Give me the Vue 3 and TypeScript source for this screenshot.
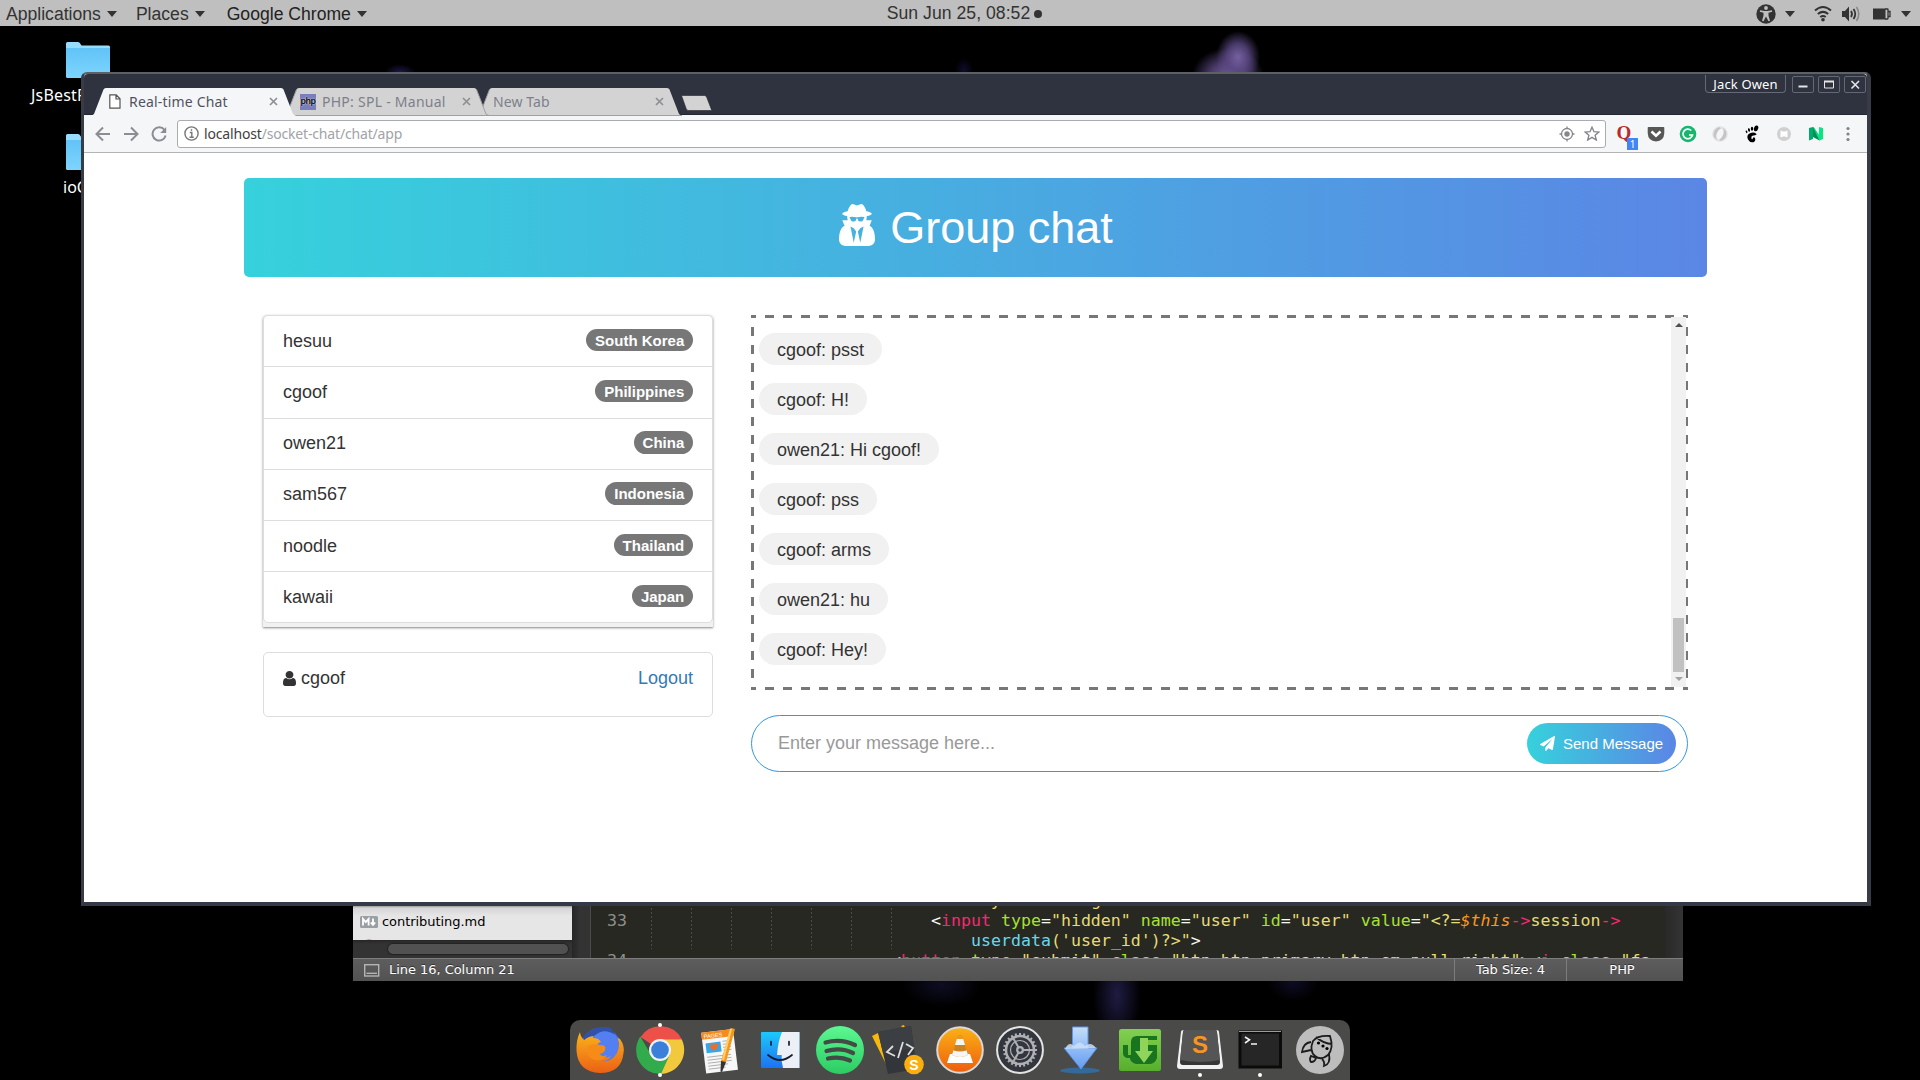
<script setup lang="ts">
interface User { name: string; country: string }
interface Token { t: string; c: string }

const users: User[] = [
  { name: 'hesuu', country: 'South Korea' },
  { name: 'cgoof', country: 'Philippines' },
  { name: 'owen21', country: 'China' },
  { name: 'sam567', country: 'Indonesia' },
  { name: 'noodle', country: 'Thailand' },
  { name: 'kawaii', country: 'Japan' },
]

const messages: string[] = [
  'cgoof: psst',
  'cgoof: H!',
  'owen21: Hi cgoof!',
  'cgoof: pss',
  'cgoof: arms',
  'owen21: hu',
  'cgoof: Hey!',
]

const tok = (c: string, t: string): Token => ({ c, t })
const inputLine: Token[] = [
  tok('w', '<'), tok('p', 'input'), tok('g', ' type'), tok('w', '='), tok('y', '"hidden"'),
  tok('g', ' name'), tok('w', '='), tok('y', '"user"'), tok('g', ' id'), tok('w', '='), tok('y', '"user"'),
  tok('g', ' value'), tok('w', '='), tok('y', '"<?='), tok('o', '$this'), tok('p', '->'), tok('y', 'session'), tok('p', '->'),
]
const wrapLine: Token[] = [tok('b', 'userdata'), tok('y', "('user_id')?>\""), tok('w', '>')]
const buttonLine: Token[] = [
  tok('w', '<'), tok('p', 'button'), tok('g', ' type'), tok('w', '='), tok('y', '"submit"'),
  tok('g', ' class'), tok('w', '='), tok('y', '"btn btn-primary btn-sm pull-right"'), tok('w', '><'),
  tok('p', 'i'), tok('g', ' class'), tok('w', '='), tok('y', '"fa'),
]
const teeth: number[] = Array.from({ length: 24 }, (_, i) => i * 15)
</script>

<template>
  <div class="desktop">
    <div class="nebula"></div>

    <div class="shortcut first">
      <svg width="44" height="36" viewBox="0 0 44 36"><defs><linearGradient id="fold" x1="0" y1="0" x2="0" y2="1"><stop offset="0" stop-color="#62c3f7" /><stop offset="1" stop-color="#7dd5fd" /></linearGradient></defs><path d="M0 1.5Q0 0 1.500 0H12q1.500 0 2.500 2l1 1.500H42.500Q44 3.500 44 5V10H0z" fill="#98dcfb" /><path d="M0 6H44V34.500Q44 36 42.500 36H1.500Q0 36 0 34.500z" fill="url(#fold)" /></svg>
      <span>JsBestPractices</span>
    </div>
    <div class="shortcut second">
      <svg width="44" height="36" viewBox="0 0 44 36"><path d="M0 1.500Q0 0 1.500 0H12q1.500 0 2.500 2l1 1.500H42.500Q44 3.500 44 5V10H0z" fill="#98dcfb" /><path d="M0 6H44V34.500Q44 36 42.500 36H1.500Q0 36 0 34.500z" fill="url(#fold)" /></svg>
      <span>ioChat</span>
    </div>

    <header class="panel">
      <nav>
        <span class="m1">Applications<i class="caret"></i></span>
        <span class="m2">Places<i class="caret"></i></span>
        <span class="m3">Google Chrome<i class="caret"></i></span>
      </nav>
      <div class="clock">Sun Jun 25, 08:52<i></i></div>
      <div class="tray">
        <svg width="20" height="20" viewBox="0 0 20 20"><circle cx="10" cy="10" r="9.700" fill="#333" /><circle cx="10" cy="4" r="1.900" fill="#bfbfbf" /><path d="M4 6.300l4.500.8h3l4.500-.8.2 1.400-3.700 1v3l1.500 5-1.500.5L10 12.500l-2.500 4.700-1.500-.5 1.500-5v-3l-3.700-1z" fill="#bfbfbf" /></svg>
        <i class="caret ta"></i>
        <svg class="wifi" width="18" height="17" viewBox="0 0 18 17" fill="none" stroke="#333" stroke-width="2"><path d="M1 5.500Q9-1.500 17 5.500M3.800 9Q9 4.800 14.200 9M6.300 12Q9 10 11.700 12" /><circle cx="9" cy="14.700" r="1.800" fill="#333" stroke="none" /></svg>
        <svg class="vol" width="18" height="16" viewBox="0 0 18 16"><path d="M0 5h3l4-4.500v15L3 11H0z" fill="#333" /><path d="M9 5q2 3 0 6M11.500 3q3.500 5 0 10" fill="none" stroke="#333" stroke-width="1.800" /><path d="M14.500 1q4.500 7 0 14" fill="none" stroke="#888" stroke-width="1.600" /></svg>
        <svg class="bat" width="18" height="12" viewBox="0 0 18 12"><path d="M0 .5h12.500v11H0z" fill="#333" /><path d="M12 1h2.500q.5 0 .5.500v9q0 .5-.5.500H12M15.500 3.500h1.500v5h-1.500" fill="none" stroke="#333" stroke-width="1.300" /></svg>
        <i class="caret tb"></i>
      </div>
    </header>

    <section class="editor">
      <div class="work">
        <div class="side">
          <div class="files">
            <div class="file"><svg width="18" height="12" viewBox="0 0 18 12"><rect width="18" height="12" rx="1.500" fill="#9a9fa3" /><path d="M3 9.500V3l2.800 3.200L8.600 3v6.500M13 2.500v6M10.800 6.500L13 9l2.200-2.500" fill="none" stroke="#fff" stroke-width="1.800" /></svg>contributing.md</div>
            <div class="file next"><svg width="14" height="14" viewBox="0 0 14 14"><circle cx="7" cy="7" r="6" fill="#dbe5f5" stroke="#7ba0d8" stroke-width="1.500" /></svg>example.html</div>
          </div>
          <div class="hscroll"><i></i></div>
        </div>
        <div class="gutter"></div>
        <div class="code">
          <div class="guides"></div>
          <pre class="row"><b>  </b><span class="y before">y         g</span></pre>
          <pre class="row r1"><b>33</b><span><i v-for="(k, i) in inputLine" :key="i" :class="k.c">{{ k.t }}</i></span></pre>
          <pre class="row r2"><b>  </b><span><i v-for="(k, i) in wrapLine" :key="i" :class="k.c">{{ k.t }}</i></span></pre>
          <pre class="row r3"><b>34</b><span><i v-for="(k, i) in buttonLine" :key="i" :class="k.c">{{ k.t }}</i></span></pre>
        </div>
        <div class="edge"></div>
      </div>
      <footer class="status">
        <svg width="16" height="13" viewBox="0 0 16 13" fill="none" stroke="#b4b4b4" stroke-width="1.400"><rect x=".7" y=".7" width="14" height="11.300" /><path d="M2.500 9.300h10.500" /></svg>
        <span class="pos">Line 16, Column 21</span>
        <span class="tabsize">Tab Size: 4</span>
        <span class="lang">PHP</span>
      </footer>
    </section>

    <section class="browser">
      <div class="titlebar">
        <div class="tabs">
          <div class="tab active">
            <svg class="shape" width="206" height="28" viewBox="0 0 206 28"><path d="M0 28L3 26 12.500 1.500Q13 0 15 0H190Q192 0 192.500 1.500L202 26 205 28z" fill="#f5f6f8" /></svg>
            <svg class="doc" width="12" height="15" viewBox="0 0 12 15" fill="#fff" stroke="#555" stroke-width="1.200"><path d="M.8.800H7.200L11 4.800V14.200H.8zM7 .8V5H11" /></svg>
            <span class="label">Real-time Chat</span><span class="x"><svg width="9" height="9" viewBox="0 0 9 9"><path d="M1 1l7 7M8 1L1 8" /></svg></span>
          </div>
          <div class="tab">
            <svg class="shape" width="206" height="28" viewBox="0 0 206 28"><path d="M0 28L3 26 12.500 1.500Q13 0 15 0H190Q192 0 192.500 1.500L202 26 205 28z" fill="#d3d3d3" /><path d="M0 27.500H205M3 26L12.500 1.500M192.500 1.500L202 26l3 1.500" stroke="#a0a0a0" fill="none" /></svg>
            <span class="php">php</span>
            <span class="label">PHP: SPL - Manual</span><span class="x"><svg width="9" height="9" viewBox="0 0 9 9"><path d="M1 1l7 7M8 1L1 8" /></svg></span>
          </div>
          <div class="tab third">
            <svg class="shape" width="206" height="28" viewBox="0 0 206 28"><path d="M0 28L3 26 12.500 1.500Q13 0 15 0H190Q192 0 192.500 1.500L202 26 205 28z" fill="#d3d3d3" /><path d="M0 27.500H205M3 26L12.500 1.500" stroke="#a0a0a0" fill="none" /></svg>
            <span class="label">New Tab</span><span class="x"><svg width="9" height="9" viewBox="0 0 9 9"><path d="M1 1l7 7M8 1L1 8" /></svg></span>
          </div>
          <svg class="newtab" width="33" height="16" viewBox="0 0 33 16"><path d="M1.500.5H24.500Q26 .5 26.600 2L31.800 15.500H8.500Q7 15.500 6.300 14z" fill="#d3d3d3" stroke="#22252e" stroke-width=".6" /></svg>
        </div>
        <div class="controls">
          <span class="owner">Jack Owen</span>
          <span class="wb"><svg width="20" height="15" viewBox="0 0 20 15"><path d="M5.500 9.500h9" stroke="#e5e5e5" stroke-width="2" /></svg></span>
          <span class="wb"><svg width="20" height="15" viewBox="0 0 20 15"><path d="M5.500 4.500h9v6.500h-9z" fill="none" stroke="#e5e5e5" /><path d="M5 4.500h10" stroke="#e5e5e5" stroke-width="2" /></svg></span>
          <span class="wb"><svg width="20" height="15" viewBox="0 0 20 15"><path d="M6.500 4l7.500 7.500M14 4l-7.500 7.500" stroke="#e5e5e5" stroke-width="1.600" /></svg></span>
        </div>
      </div>

      <div class="toolbar">
        <svg class="nav back" width="16" height="16" viewBox="0 0 16 16"><path d="M15 8H2M8 1.500L1.500 8 8 14.500" /></svg>
        <svg class="nav fwd" width="16" height="16" viewBox="0 0 16 16"><path d="M1 8h13M8 1.500L14.500 8 8 14.500" /></svg>
        <svg class="nav rel" width="16" height="16" viewBox="0 0 16 16"><path d="M13.500 4A6.600 6.600 0 1 0 14.600 9.500" /><path d="M15.200 1v6H9.200z" fill="#8b8d93" stroke="none" /></svg>
        <div class="omnibox">
          <svg width="15" height="15" viewBox="0 0 15 15" fill="none" stroke="#777" stroke-width="1.400"><circle cx="7.500" cy="7.500" r="6.600" /><path d="M5.800 6.500h2V11M5.500 11.200h4.300" /><circle cx="7.500" cy="4" r=".6" fill="#777" stroke-width=".8" /></svg>
          <span class="url">localhost<em>/socket-chat/chat/app</em></span>
          <svg class="target" width="16" height="16" viewBox="0 0 16 16" fill="none" stroke="#85878c" stroke-width="1.300"><circle cx="8" cy="8" r="5.500" /><circle cx="8" cy="8" r="2.700" fill="#85878c" stroke="none" /><path d="M8 .5v2.500M8 13v2.500M.5 8h2.500M13 8h2.500" /></svg>
          <svg class="star" width="16" height="15" viewBox="0 0 16 15" fill="none" stroke="#85878c" stroke-width="1.400"><path d="M8 1.200l2 4.500 4.800.4-3.700 3.200 1.200 4.700L8 11.400 3.700 14l1.200-4.700L1.200 6.100 6 5.700z" /></svg>
        </div>
        <div class="exts">
          <span class="ext quora">Q<b>1</b></span>
          <svg class="ext" width="18" height="16" viewBox="0 0 18 16"><path d="M1.500 1h15q.8 0 .8.800V7Q17 15 9 15.500 1 15 .7 7V1.800Q.7 1 1.500 1z" fill="#575757" /><path d="M4.500 5.500L9 9.700l4.500-4.200" fill="none" stroke="#fff" stroke-width="2.600" /></svg>
          <svg class="ext" width="18" height="18" viewBox="0 0 18 18"><circle cx="9" cy="9" r="8.300" fill="#15b66e" /><path d="M12.200 5.500A4.800 4.800 0 1 0 13.500 10H10" fill="none" stroke="#fff" stroke-width="1.700" /></svg>
          <svg class="ext" width="18" height="18" viewBox="0 0 18 18"><circle cx="9" cy="9" r="7.800" fill="#e2e2e2" /><path d="M8 2Q1 5 3 12l3 3q-3-7 4-11zM10 16q7-3 5-10l-3-3q3 7-4 11z" fill="#c4c4c4" /><ellipse cx="9" cy="9" rx="3" ry="5.500" fill="#f5f5f5" transform="rotate(20 9 9)" /></svg>
          <svg class="ext" width="18" height="18" viewBox="0 0 18 18" fill="#000"><ellipse cx="13.200" cy="3.300" rx="2.100" ry="3" transform="rotate(20 13 3)" /><ellipse cx="9" cy="3.700" rx="1.200" ry="2" /><ellipse cx="6" cy="5" rx="1" ry="1.700" transform="rotate(-15 6 5)" /><ellipse cx="3.600" cy="7" rx=".8" ry="1.400" transform="rotate(-20 3 7)" /><path d="M13.500 9Q11 6.500 7 8.200 3 10 5 14.500 7 18 10.500 17.200 13 16 12 13q-1.300-1.300-2 0-.7 2-1.500.7-.8-2.300 1-3 3-.3 4-1.200z" /></svg>
          <svg class="ext" width="18" height="18" viewBox="0 0 18 18"><circle cx="9" cy="9" r="7" fill="#d0d0d0" /><path d="M5.500 5.500l2.500 1h2l2.500-1v7l-2.500-1H8l-2.500 1z" fill="#fff" /></svg>
          <svg class="ext" width="18" height="16" viewBox="0 0 18 16"><path d="M2 2l4-1v12l-4 1.500z" fill="#00ab6b" /><path d="M5.500 1l7 13.500V10L7 1.500z" fill="#00c97b" /><path d="M6 1l6.500 13.500L16 13V2l-4-1v8z" fill="#05e781" /><path d="M6 1v10L12.500 14.500z" fill="#008e57" /></svg>
          <svg class="ext dots" width="18" height="18" viewBox="0 0 18 18" fill="#808287"><circle cx="9" cy="3.500" r="1.600" /><circle cx="9" cy="9" r="1.600" /><circle cx="9" cy="14.500" r="1.600" /></svg>
        </div>
      </div>

      <main class="page">
        <div class="container">
          <h1 class="banner">
            <svg width="36" height="42" viewBox="128 0 1408 1664" preserveAspectRatio="none" fill="#fff"><path fill-rule="evenodd" d="M704 1536l96-448-96-128-128-64zM960 1536l128-640-128 64-96 128zM1120 524q-2-4-4-6-10-8-96-8-70 0-167 19-7 2-21 2t-21-2q-97-19-167-19-86 0-96 8-2 2-4 6 2 18 4 27 2 3 7.500 6.500t7.500 10.500q2 4 7.500 20.500t7 20.500 7.500 17 8.500 17 9 14 12 13.500 14 9.500 17.500 8 20.500 4 24.500 2q36 0 59-12.500t32.500-30 14.500-34.500 11.500-29.500 17.500-12.500h12q11 0 17.500 12.500t11.500 29.500 14.500 34.500 32.500 30 59 12.500q13 0 24.500-2t20.500-4 17.500-8 14-9.500 12-13.500 9-14 8.500-17 7.500-17 7-20.500 7.500-20.500q2-7 7.500-10.500t7.500-6.500q2-9 4-27zM1536 1405q0 121-73 190t-194 69h-874q-121 0-194-69t-73-190q0-61 4.500-118t19-125.500 37.500-123.500 63.500-103.500 93.500-74.500l-90-220h214q-22-64-22-128 0-12 2-32-194-40-194-96 0-57 210-99 17-62 51.500-134t70.500-114q32-37 76-37 30 0 84 31t84 31 84-31 84-31q44 0 76 37 36 42 70.500 114t51.500 134q210 42 210 99 0 56-194 96 7 81-20 160h214l-82 225q63 33 107.500 96.500t65.500 143.500 29 151.500 8 148.500z" /></svg>
            <span>Group chat</span>
          </h1>
          <div class="cols">
            <aside>
              <div class="userbox">
                <ul>
                  <li v-for="u in users" :key="u.name">{{ u.name }}<span class="badge">{{ u.country }}</span></li>
                </ul>
              </div>
              <div class="me">
                <span class="who"><svg width="13" height="15" viewBox="256 128 1280 1536" preserveAspectRatio="none" fill="#333"><path d="M1536 1399q0 109-62.500 187t-150.500 78h-854q-88 0-150.500-78t-62.500-187q0-85 8.500-160.500t31.500-152 58.500-131 94-89 134.500-34.500q131 128 313 128t313-128q76 0 134.500 34.500t94 89 58.500 131 31.500 152 8.500 160.500zm-256-887q0 159-112.500 271.500t-271.500 112.500-271.500-112.500-112.500-271.500 112.500-271.500 271.500-112.500 271.500 112.500 112.500 271.500z" /></svg>cgoof</span>
                <a>Logout</a>
              </div>
            </aside>
            <div class="conversation">
              <div class="log">
                <div class="msgs"><p v-for="m in messages" :key="m">{{ m }}</p></div>
                <div class="vscroll"><i class="up"></i><i class="thumb"></i><i class="down"></i></div>
              </div>
              <div class="compose">
                <span class="placeholder">Enter your message here...</span>
                <button type="button"><svg width="15" height="15" viewBox="0 0 1792 1792" fill="#fff"><path d="M1764 11q33 24 27 64l-256 1536q-5 29-32 45-14 8-31 8-11 0-24-5l-453-185-242 295q-18 23-49 23-13 0-22-4-19-7-30.500-23.500t-11.500-36.500v-349l864-1059-1069 925-395-162q-37-14-40-55-2-40 32-59l1664-960q15-9 32-9 20 0 36 11z" /></svg>Send Message</button>
              </div>
            </div>
          </div>
        </div>
      </main>
    </section>

    <div class="dock">
      <!-- Firefox -->
      <div class="app"><svg viewBox="0 0 48 48"><defs><linearGradient id="ff" x1="0" y1="0" x2="0" y2="1"><stop offset="0" stop-color="#f9b41a" /><stop offset="1" stop-color="#ec6015" /></linearGradient></defs><circle cx="25" cy="22" r="20.500" fill="#3c62c8" /><path d="M4 6q0 4 4 8Q18 4 33 8L44 13q5 7 3.500 14-2 20-23.500 20Q2 46 .5 25 0 14 4 6z" fill="url(#ff)" /><path d="M17 9Q30-1 39 8q7 8 2 19-6 10-16 8 8 0 10-5-7 4-11-2 6-2 5-6l-7-1q-2-4 3-5-2-4-8-4z" fill="#537ff2" /><path d="M8 10Q20-2 35 2l4 7Q28 1 18 10q-5 0-10 4z" fill="#3152aa" /><path d="M12 20q7-3 12-1 7 0 5 5l-7 3q3 5 9 2-5 8-15 4-7-4-4-13z" fill="#f68b18" /></svg></div>
      <!-- Chrome -->
      <div class="app open top"><svg viewBox="0 0 48 48"><path d="M24 24L4.500 11A24 24 0 0 1 46 13.500z" fill="#ec5048" /><path d="M24 13.500H45.800A24 24 0 0 1 24 48L34 28z" fill="#f2c93c" /><path d="M4.300 10.500A24 24 0 0 0 25 48L33.500 29 14 27z" fill="#31ab4c" /><circle cx="24" cy="24" r="11" fill="#f1f1f1" /><circle cx="24" cy="24" r="8.800" fill="#3a80da" /></svg></div>
      <!-- Pages -->
      <div class="app"><svg viewBox="0 0 48 48"><g transform="translate(1.500 .5) rotate(-7 24 24)"><path d="M6 4H38V45H6z" fill="#f7f7f7" /><path d="M6 4H38V11H6z" fill="#f58d1e" /><text x="8" y="10" class="pages">PAGES</text><path d="M9 15H24V25H9z" fill="#33a6ef" /><path d="M12 17h10l-3 6h-4z" fill="#f06e24" /><path d="M26 15h8M26 18h8M26 21h8M26 24h8M9 29h24M9 32h24M9 35h24M9 38h20M9 41h17" stroke="#aaa" stroke-width=".9" /></g><path d="M35 2l4 1L30 36l-5-1z" fill="#f3981c" /><path d="M34 2.500l2 .5-8 31-2-.5z" fill="#ffd067" /><path d="M25 35l5 1-4 10-1.500-.5z" fill="#333" /></svg></div>
      <!-- Finder -->
      <div class="app"><svg viewBox="0 0 48 48"><defs><linearGradient id="fi" x1="0" y1="0" x2="0" y2="1"><stop offset="0" stop-color="#1cc9fb" /><stop offset="1" stop-color="#1d72f2" /></linearGradient></defs><rect x="5" y="6" width="38.500" height="36" rx="1" fill="url(#fi)" /><path d="M26 6H43.500V42H27q-2-7-1.300-13H21Q22 15 26 6z" fill="#eceff5" /><path d="M12 29q12 10 24 0M15 15.500v3.500M33 15.500v3.500" stroke="#171d2d" stroke-width="1.700" fill="none" stroke-linecap="round" /></svg></div>
      <!-- Spotify -->
      <div class="app"><svg viewBox="0 0 48 48"><defs><linearGradient id="sp" x1="0" y1="0" x2="0" y2="1"><stop offset="0" stop-color="#5cf892" /><stop offset="1" stop-color="#2ccc63" /></linearGradient></defs><circle cx="24" cy="24" r="24" fill="url(#sp)" /><path d="M9.500 16.500Q25 12.500 39 19M10.500 25Q25 21 37 27M12 32.500Q24 30 34 34.500" stroke="#444a45" stroke-width="4.200" fill="none" stroke-linecap="round" /></svg></div>
      <!-- Script editor -->
      <div class="app"><svg viewBox="0 0 48 48"><path d="M-4 10L4 6l12 34-3 4zM25 0l3-1 2 6z" fill="#f9b80c" /><path d="M2 6L35 0l6 43L12 48z" fill="#323539" /><path d="M2 6L35 0l3 22L7 27z" fill="#3b3f43" /><path d="M17 20l-6 6 8 4M30 18l7 4-5 7M27 16l-5 16" stroke="#dedede" stroke-width="1.800" fill="none" /><circle cx="38" cy="38.500" r="9.800" fill="#fbae0e" /><text x="38" y="43.500" class="badge-s">S</text></svg></div>
      <!-- VLC -->
      <div class="app"><svg viewBox="0 0 48 48"><defs><linearGradient id="vl" x1="0" y1="0" x2="0" y2="1"><stop offset="0" stop-color="#fbb116" /><stop offset="1" stop-color="#ee5d0c" /></linearGradient></defs><circle cx="24" cy="24" r="22.800" fill="url(#vl)" stroke="#d9d9d9" stroke-width="2" /><path d="M14 28H34l3 9H11z" fill="#fff" /><path d="M22 9h4l6 20q-8 4-16 0z" fill="#e39a28" /><path d="M20.800 13h6.400l1.800 6h-10zM17.600 24h12.800l1.600 5q-8 4-16 0z" fill="#f5f5f5" /><path d="M19 19h10l1.400 5.500q-6.400 2-12.800 0z" fill="#c98420" /></svg></div>
      <!-- Settings -->
      <div class="app"><svg viewBox="0 0 48 48"><circle cx="24" cy="24" r="22.900" fill="#33363d" stroke="#e4e4e4" stroke-width="2" /><g stroke="#aeb0b4" fill="none"><circle cx="24" cy="24" r="14" stroke-width="2.500" /><circle cx="24" cy="24" r="9.500" stroke-width="1.200" /><path d="M24 24h13M24 24L17.500 12.800M24 24L17.500 35.200" stroke-width="2" /><path v-for="a in teeth" :key="a" d="M24 7v3" stroke-width="2" :transform="`rotate(${a} 24 24)`" /></g><circle cx="24" cy="24" r="4" fill="#aeb0b4" /><circle cx="24" cy="24" r="1.700" fill="#33363d" /></svg></div>
      <!-- Downloader -->
      <div class="app"><svg viewBox="0 0 48 48"><defs><linearGradient id="dn" x1="0" y1="0" x2="0" y2="1"><stop offset="0" stop-color="#c5def9" /><stop offset="1" stop-color="#639cf0" /></linearGradient></defs><ellipse cx="24" cy="44.500" rx="20" ry="3" fill="#2f72ac" opacity=".8" /><path d="M16.500 1H32V22H41L25 43 8 22h8.500z" fill="url(#dn)" stroke="#5a95ee" /><path d="M9 23q4-8 9-3 6-7 11 0 6-5 11 2z" fill="#cde1f9" opacity=".85" /></svg></div>
      <!-- uGet -->
      <div class="app"><svg viewBox="0 0 48 48"><defs><linearGradient id="ug" x1="0" y1="0" x2="0" y2="1"><stop offset="0" stop-color="#82d053" /><stop offset="1" stop-color="#57ae2c" /></linearGradient></defs><rect x="3" y="3" width="42" height="42" rx="2.500" fill="url(#ug)" /><path d="M7 19H12V29h3V16q0-6 6-6H41v4H27v5H41V32q-2 6-8 6H20q-6-2-6-6H11q-4-1-4-5z" fill="#197420" /><path d="M24 12h8v13h5L28 37 19 25h5z" fill="#91d45c" /></svg></div>
      <!-- Sublime Text -->
      <div class="app open"><svg viewBox="0 0 48 48"><path d="M5 6Q5 4 8 4H40q3 0 3 2l4 34q0 3-3 3H4q-3 0-3-3z" fill="#f1f1f1" /><path d="M7 6Q7 4 9 4H39q2 0 2 2l3 30q0 3-3 3H7q-3 0-3-3z" fill="#363636" /><path d="M7 6Q7 4 9 4H39q2 0 2 2l3 28q-20 4-40 0z" fill="#555" /><text x="24" y="27" class="sublime">S</text></svg></div>
      <!-- Terminal -->
      <div class="app open"><svg viewBox="0 0 48 48"><rect x="4" y="6" width="40.500" height="35" fill="#262626" stroke="#0b0b0b" stroke-width="3" /><path d="M3 5.500H45" stroke="#8fa1a1" /><path d="M9 11l4.500 2.800L9 17M15 18h6" fill="none" stroke="#f5f5f5" stroke-width="1.600" /></svg></div>
      <!-- Launcher -->
      <div class="app"><svg viewBox="0 0 48 48"><circle cx="24" cy="24" r="24" fill="#bdbdbd" /><g fill="none" stroke="#1c1c1c" stroke-width="1.800"><path d="M17 15Q22 9 34 10 38 22 32 29q-7 6-13 1Q13 25 17 15zM20 11q8 7 16 7M15 16Q7 17 6 26l9-2M26 33q3 3 2 7 7-2 5-12M15 30q-2 4 0 6 4 0 5-4z" /></g><circle cx="22.500" cy="17" r="1.600" /><circle cx="27" cy="20" r="1.600" /><circle cx="31" cy="22.500" r="1.600" /></svg></div>
    </div>
  </div>
</template>

<style>
body { margin: 0; background: #000; }
</style>

<style scoped>
* { box-sizing: border-box; }
svg { display: block; flex: none; }
.desktop { position: relative; width: 1920px; height: 1080px; overflow: hidden; background: #000; font-family: "Liberation Sans", Arial, sans-serif; color: #333; }
.nebula { position: absolute; inset: 0; background:
  radial-gradient(ellipse 22px 26px at 1238px 57px, #75609f 0, #5d4a87cc 50%, transparent 100%),
  radial-gradient(ellipse 36px 28px at 1228px 76px, #75609f 0, #5a467fcc 50%, transparent 100%),
  radial-gradient(ellipse 16px 9px at 400px 73px, #1f1950 0, transparent 100%),
  radial-gradient(ellipse 9px 12px at 964px 70px, #0e0c2c 0, transparent 100%),
  radial-gradient(ellipse 24px 50px at 1117px 995px, #1f1c42 0, transparent 100%),
  radial-gradient(ellipse 40px 22px at 942px 985px, #0e0d22 0, transparent 100%),
  radial-gradient(ellipse 26px 20px at 1293px 982px, #0e0c24 0, transparent 100%); }

.shortcut { position: absolute; color: #fff; font: 16px/22px "Noto Sans", sans-serif; white-space: nowrap; }
.shortcut svg { margin-left: 35px; }
.shortcut.first { left: 31px; top: 42px; }
.shortcut.first span { display: block; margin-top: 6px; letter-spacing: .2px; }
.shortcut.second { left: 31px; top: 134px; }
.shortcut.second span { display: block; margin: 6px 0 0 32px; }

.panel { position: relative; height: 26px; background: #bfbfbf; display: grid; grid-template-columns: 1fr auto 1fr; align-items: center; font-size: 17.6px; line-height: 26px; }
nav { display: flex; padding: 1px 0 0 6px; }
nav span { display: flex; align-items: center; white-space: nowrap; }
.m2 { margin-left: 19px; }
.m3 { margin-left: 22px; color: #222; }
.caret { display: inline-block; border: 5px solid transparent; border-top: 6px solid #333; border-bottom: 0; margin-left: 6px; }
.clock { display: flex; align-items: center; line-height: 24px; height: 26px; padding-bottom: 2px; margin-left: 9px; letter-spacing: .04px; }
.clock i { width: 8px; height: 8px; border-radius: 50%; background: #333; margin: 2px 0 0 4px; }
.tray { display: flex; align-items: center; justify-content: flex-end; padding-right: 9px; }
.ta { margin: 0 19px 0 9px; }
.vol { margin-left: 10px; }
.bat { margin-left: 13px; }
.tb { margin-left: 10px; }

/* Browser window */
.browser { position: absolute; left: 81px; top: 72px; width: 1790px; height: 834px; background: #fff; border: 3px solid #383c46; border-top: 2px solid #5d6065; border-right-width: 4px; border-bottom: 4px solid #343945; border-radius: 6px 6px 0 0; display: flex; flex-direction: column; }
.titlebar { height: 41px; flex: none; background: #2f333f; display: flex; justify-content: space-between; border-bottom: 1px solid #23262f; border-radius: 4px 4px 0 0; }
.tabs { display: flex; padding: 14px 0 0 7px; height: 42px; }
.tab { position: relative; width: 206px; height: 28px; margin-right: -13px; display: flex; align-items: center; padding: 0 0 1px 18px; z-index: 2; color: #7d7f8a; font: 14px/26px "Noto Sans", sans-serif; white-space: nowrap; }
.tab.active { z-index: 3; color: #50535f; }
.tab.third { z-index: 1; padding-left: 16px; }
.shape { position: absolute; left: 0; top: 0; z-index: -1; }
.label { margin-left: 8px; letter-spacing: .18px; }
.third .label { margin-left: 0; letter-spacing: .1px; }
.x { margin-left: auto; margin-right: 19px; }
.x svg { fill: none; stroke: #8d8f95; stroke-width: 1.700; }
.php { width: 16px; height: 16px; background: #7b7fb9; color: #000; font: bold 9px/15px "Liberation Sans", sans-serif; text-align: center; letter-spacing: -.5px; margin-left: -2px; text-shadow: 0 0 1px #fff, 0 0 1px #fff; }
.php + .label { margin-left: 6px; letter-spacing: .26px; }
.newtab { margin: 7px 0 0 10px; }
.controls { display: flex; padding-top: 1px; gap: 4px; margin-right: 1px; }
.owner { width: 81px; height: 18px; border: 1px solid #666a75; border-top: 0; border-radius: 0 0 4px 4px; color: #fff; font: 13px/18px "Noto Sans", sans-serif; letter-spacing: .15px; text-align: center; margin-right: 2px; white-space: nowrap; }
.wb { width: 22px; height: 17px; border: 1px solid #646875; border-radius: 2px; margin-top: 1px; }
.toolbar { height: 38px; background: #f5f6f8; border-bottom: 1px solid #b3b4b6; display: flex; align-items: center; flex: none; }
.nav { fill: none; stroke: #8b8d93; stroke-width: 2; }
.back { margin-left: 11px; }
.fwd { margin-left: 12px; }
.rel { margin-left: 12px; }
.omnibox { margin-left: 10px; width: 1429px; height: 28px; border: 1px solid #a9abae; border-radius: 3px; background: #fff; display: flex; align-items: center; padding: 0 5px 0 6px; }
.url { font: 14px/26px "Noto Sans", sans-serif; margin-left: 5px; color: #414141; letter-spacing: -.17px; }
.url em { font-style: normal; color: #a1a3a7; }
.target { margin-left: auto; }
.star { margin: 0 0 0 9px; }
.exts { display: flex; align-items: center; gap: 14px; margin-left: 9px; }
.ext { width: 18px; }
.quora { position: relative; height: 24px; color: #b92b27; font: bold 19px/22px "Liberation Serif", serif; text-align: center; }
.quora b { position: absolute; right: -5px; bottom: -4px; width: 11px; height: 12px; background: #4285f4; color: #fff; font: 10px/12px "Noto Sans", sans-serif; }

.page { flex: 1; min-height: 0; font-size: 18px; line-height: 25px; }
.container { width: 1463px; margin: 25px auto 0; }
.banner { margin: 0; height: 99px; border-radius: 5px; background: linear-gradient(90deg, #36d1dc, #5b86e5); color: #fff; font-weight: 400; font-size: 45px; line-height: 99px; display: flex; align-items: center; justify-content: center; gap: 16px; }
.banner svg { margin: -5px -1px 0 1px; }
.cols { display: flex; margin: 38px 19px 0 19px; gap: 38px; }
aside { width: 450px; flex: none; }
.userbox { height: 312px; background: #f1f1f1; box-shadow: 0 1px 3px rgba(0,0,0,.22), 0 1px 2px rgba(0,0,0,.3); border-radius: 4px 4px 0 0; }
ul { list-style: none; margin: 0; padding: 0; }
li { height: 51.25px; border: 1px solid #ddd; border-bottom: 0; background: #fff; padding: 12.5px 19px; display: flex; justify-content: space-between; }
li:first-child { border-radius: 5px 5px 0 0; }
li:last-child { border-bottom: 1px solid #ddd; height: 52px; border-radius: 0 0 5px 5px; }
.badge { height: 22.5px; padding: 0 8.75px; line-height: 23px; background: #777; border-radius: 12.5px; color: #fff; font-size: 15px; font-weight: 700; }
.me { margin-top: 25px; height: 65px; border: 1px solid #ddd; border-radius: 5px; padding: 13px 19px; display: flex; justify-content: space-between; }
.who { display: flex; gap: 5px; height: 25px; align-items: center; }
.who svg { margin-top: -1px; }
a { color: #337ab7; }
.conversation { width: 937px; flex: none; }
.log { height: 375px; display: flex; justify-content: space-between; padding: 2px 2px 3px 8px; background:
  repeating-linear-gradient(90deg, #777 0 9px, transparent 9px 18px) -4px 0 / 941px 3px no-repeat,
  repeating-linear-gradient(90deg, #777 0 9px, transparent 9px 18px) -4px 100% / 941px 3px no-repeat,
  repeating-linear-gradient(180deg, #777 0 9px, transparent 9px 18px) 0 12px / 3px 351px no-repeat,
  repeating-linear-gradient(180deg, #777 0 9px, transparent 9px 18px) 100% 12px / 2px 351px no-repeat; }
.msgs { padding-top: 16px; display: flex; flex-direction: column; align-items: flex-start; gap: 18px; }
.msgs p { margin: 0; height: 32px; padding: 0 18px; border-radius: 18px; background: #f1f1f1; line-height: 34px; }
.vscroll { width: 15px; height: 370px; background: #f1f1f1; display: flex; flex-direction: column; align-items: center; }
.up { border: 4px solid transparent; border-top: 0; border-bottom: 4px solid #505050; margin-top: 6px; }
.thumb { width: 11px; height: 54px; background: #c1c1c1; margin-top: 291px; }
.down { border: 4px solid transparent; border-bottom: 0; border-top: 4px solid #a3a3a3; margin-top: 5px; }
.compose { margin-top: 25px; height: 57px; border: 1px solid #3498db; border-radius: 29px; display: flex; align-items: center; justify-content: space-between; padding: 0 11px 0 26px; }
.placeholder { color: #999; }
button { width: 149px; height: 41px; border: 0; border-radius: 21px; background: linear-gradient(90deg, #36d1dc, #5b86e5); color: #fff; font: 15px "Liberation Sans", Arial, sans-serif; display: flex; align-items: center; padding: 0 0 0 13px; gap: 8px; white-space: nowrap; }

/* Code editor behind the browser */
.editor { position: absolute; left: 353px; top: 880px; width: 1330px; height: 101px; background: #323232; display: flex; flex-direction: column; }
.work { height: 78px; display: flex; }
.side { width: 219px; }
.files { height: 60px; background: linear-gradient(#999 26px, #d5d5d5 28px, #e6e6e6 36px); overflow: hidden; padding-top: 32px; font: 13px/20px "DejaVu Sans", sans-serif; color: #000; }
.file { display: flex; align-items: center; padding-left: 7px; gap: 4px; height: 20px; letter-spacing: -.05px; }
.file.next { padding: 4px 0 0 9px; height: 24px; gap: 6px; }
.hscroll { height: 18px; padding: 4px 0 0 35px; background: linear-gradient(#262626, #333 4px); }
.hscroll i { display: block; width: 180px; height: 10px; border-radius: 5px; background: #515151; box-shadow: 0 0 1px 1px #222; }
.gutter { width: 19px; background: linear-gradient(90deg, #262626, #333 8px); border-right: 1px solid #4b4b4b; }
.code { position: relative; width: 1074px; background: #272822; overflow: hidden; padding-top: 10.5px; }
.guides { position: absolute; left: 60px; top: 26px; width: 241px; height: 43px; background: repeating-linear-gradient(180deg, #272822 0 2px, transparent 2px 4px), repeating-linear-gradient(90deg, #4a4b43 0 1px, transparent 1px 40px); }
.row { position: relative; margin: 0; height: 20px; font: 16.6px/20px "DejaVu Sans Mono", monospace; display: flex; white-space: pre; }
.row b { font-weight: 400; color: #8f908a; width: 20px; margin-left: 16px; }
.row span { margin-left: 304px; }
.row .before { margin-left: 364px; }
.row.r2 span { margin-left: 344px; }
.row.r3 span { margin-left: 264px; }
.row i { font-style: normal; }
.w { color: #f8f8f2; }
.p { color: #f92672; }
.g { color: #a6e22e; }
.y { color: #e6db74; }
.b { color: #66d9ef; }
.row .o { color: #fd971f; font-style: italic; }
.edge { flex: 1; background: linear-gradient(90deg, #292929, #343434); }
.status { height: 23px; border-top: 1px solid #7d7d7d; background: linear-gradient(#5d5d5d, #525252); display: flex; align-items: center; padding-left: 11px; color: #fff; font: 13px/22px "DejaVu Sans", sans-serif; letter-spacing: -.04px; text-shadow: 0 -1px #333; }
.pos { margin-left: 9px; }
.tabsize { margin-left: auto; width: 112px; border-left: 1px solid #7c7c7c; text-align: center; }
.lang { width: 117px; border-left: 1px solid #7c7c7c; text-align: center; padding-right: 6px; }

.dock { position: absolute; left: 570px; top: 1020px; width: 780px; height: 60px; border-radius: 10px 10px 0 0; background: #4a4a49; display: flex; }
.app { position: relative; width: 60px; height: 60px; padding: 6px; }
.app svg { width: 48px; height: 48px; overflow: visible; }
.open::after, .top::before { content: ""; position: absolute; left: 28px; bottom: 3px; width: 4px; height: 4px; border-radius: 50%; background: #fff; }
.top::before { bottom: auto; top: 3px; }
.pages { font: 5.500px "Liberation Sans", sans-serif; fill: #fff; }
.badge-s { font: bold 14px "Liberation Sans", sans-serif; fill: #fff; text-anchor: middle; }
.sublime { font: bold 24px "Liberation Sans", sans-serif; fill: #f99422; text-anchor: middle; }
</style>
